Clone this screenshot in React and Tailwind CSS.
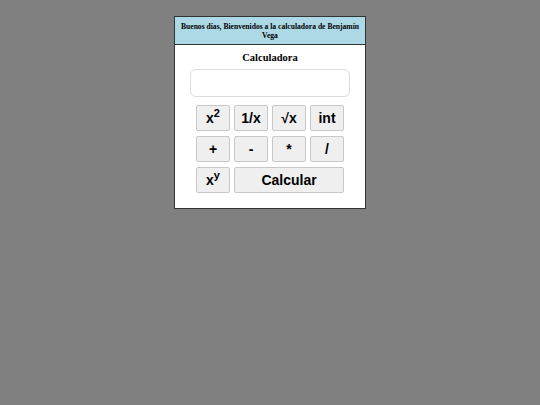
export default function App() {
  const btn =
    "h-[26px] bg-[#efefef] border border-[#c8c8c8] rounded-[2px] text-[14px] font-bold text-black flex items-center justify-center leading-none";
  return (
    <div className="w-[540px] h-[405px] bg-[#808080] pt-4 flex justify-center" style={{ fontFamily: '"Liberation Serif", serif' }}>
      <div className="w-[192px] h-[193px] bg-white border border-[#333] flex flex-col">
        <div className="bg-[#add8e6] border-b border-[#333] h-[28px] flex items-center justify-center text-center text-[7.6px] font-bold leading-[9px] px-0 text-black">
          Buenos días, Bienvenidos a la calculadora de Benjamín Vega
        </div>
        <div className="text-center text-[10.5px] font-bold mt-[6px] leading-[13px] text-black">Calculadora</div>
        <div className="mx-auto mt-[5px] w-[160px] h-[28px] border border-[#dcdcdc] rounded-[6px] bg-white"></div>
        <div
          className="mx-auto mt-[8px] grid grid-cols-[34px_34px_34px_34px] gap-x-[4px] gap-y-[5px]"
          style={{ fontFamily: '"Liberation Sans", Arial, sans-serif' }}
        >
          <div className={btn}>
            x<sup className="text-[11px] -top-[5px]">2</sup>
          </div>
          <div className={btn}>1/x</div>
          <div className={btn}>√x</div>
          <div className={btn}>int</div>
          <div className={btn}>+</div>
          <div className={btn}>-</div>
          <div className={btn}>*</div>
          <div className={btn}>/</div>
          <div className={btn}>
            x<sup className="text-[11px] -top-[5px]">y</sup>
          </div>
          <div className={btn + " col-span-3"}>Calcular</div>
        </div>
      </div>
    </div>
  );
}
